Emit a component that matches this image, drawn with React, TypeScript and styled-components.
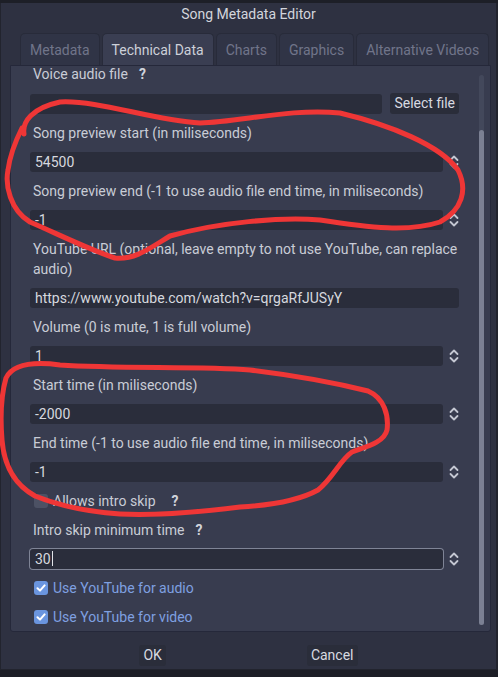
import styled, { createGlobalStyle } from "styled-components";

const GlobalStyle = createGlobalStyle`
  html, body {
    margin: 0;
    padding: 0;
    background: #1c1e26;
  }
  body {
    font-family: Roboto, "Noto Sans", sans-serif;
    font-size: 14px;
  }
`;

// Styled components
const Screen = styled.div`
  position: relative;
  width: 498px;
  height: 677px;
  overflow: hidden;
  background: #1c1e26;
`;

const TopStrip = styled.div`
  height: 3px;
  background: #1d1f27;
`;

const Window = styled.div`
  box-sizing: border-box;
  height: 667px;
  display: flex;
  flex-direction: column;
  background: #2e3141;
  border-left: 1px solid #22242e;
  border-right: 2px solid #22242e;
  border-bottom: 1px solid #22242e;
`;

const TitleBar = styled.div`
  height: 22px;
  line-height: 22px;
  text-align: center;
  color: #d3d5dc;
  font-size: 14px;
`;

const TabBar = styled.div`
  display: flex;
  gap: 2px;
  margin-top: 8px;
  padding-left: 19px;
`;

const Tab = styled.div<{ $active?: boolean }>`
  box-sizing: border-box;
  flex-shrink: 0;
  white-space: nowrap;
  height: 32px;
  line-height: 32px;
  padding: 0 9px;
  border: 1px solid #282b3a;
  border-bottom: none;
  border-radius: 5px 5px 0 0;
  background: ${(p) => (p.$active ? "#3a3e52" : "#303446")};
  color: ${(p) => (p.$active ? "#cdd0d9" : "#70758a")};
`;

const Pane = styled.div`
  box-sizing: border-box;
  height: 567px;
  margin: 0 5px 0 9px;
  display: flex;
  background: #383c4f;
  border: 1px solid #25283a;
  border-radius: 0 0 3px 3px;
`;

const Viewport = styled.div`
  flex: 1;
  overflow: hidden;
  padding: 4px 0 0 19px;
`;

const Content = styled.div`
  width: 429px;
  margin-top: -6px;
  display: flex;
  flex-direction: column;
  gap: 9px;
`;

const ScrollTrack = styled.div`
  width: 5px;
  height: 550px;
  margin: 9px 6px 0 20px;
  border-radius: 3px;
  background: #43485b;
  display: flex;
  flex-direction: column;
`;

const ScrollHandle = styled.div`
  margin-top: 55px;
  flex: 1;
  border-radius: 3px;
  background: #7b8093;
`;

const Label = styled.div`
  line-height: 20px;
  padding-left: 3px;
  color: #c9ccd6;
  display: flex;
  align-items: center;
`;

const Hint = styled.span`
  margin-left: 11px;
  font-weight: bold;
  color: #d0d3db;
`;

const Row = styled.div`
  display: flex;
  align-items: center;
  gap: 8px;
`;

const Field = styled.div<{ $focused?: boolean }>`
  box-sizing: border-box;
  flex: 1;
  height: 20px;
  line-height: 20px;
  padding-left: 5px;
  border-radius: 3px;
  background: #2a2d3b;
  color: #d6d8df;
  white-space: nowrap;
  box-shadow: ${(p) => (p.$focused ? "0 0 0 1px #7f8496" : "none")};
`;

const Caret = styled.span`
  display: inline-block;
  width: 1px;
  height: 15px;
  margin-left: 1px;
  vertical-align: -2px;
  background: #e0e2e8;
`;

const SpinRow = styled.div`
  display: flex;
  align-items: center;
`;

const Arrows = styled.div`
  width: 16px;
  display: flex;
  justify-content: flex-end;
`;

const PushButton = styled.div`
  height: 21px;
  line-height: 21px;
  padding: 0 4px;
  border-radius: 3px;
  background: #2a2d3a;
  color: #d8dae1;
  white-space: nowrap;
`;

const CheckRow = styled.div`
  height: 20px;
  display: flex;
  align-items: center;
  gap: 5px;
  padding-left: 4px;
`;

const Box = styled.div<{ $checked?: boolean }>`
  width: 14px;
  height: 14px;
  border-radius: 3px;
  background: ${(p) => (p.$checked ? "#6a95df" : "#4c5164")};
  display: flex;
  align-items: center;
  justify-content: center;
`;

const CheckText = styled.span<{ $checked?: boolean }>`
  color: ${(p) => (p.$checked ? "#7fa0e1" : "#c9ccd6")};
`;

const ButtonBox = styled.div`
  margin-top: 13px;
  display: flex;
  justify-content: center;
  gap: 141px;
`;

const Overlay = styled.svg`
  position: absolute;
  left: 0;
  top: 0;
  pointer-events: none;
`;

const SpinArrows = () => (
  <Arrows>
    <svg width="10" height="16" viewBox="0 0 10 16">
      <path d="M1.5 6 L5 2.5 L8.5 6" fill="none" stroke="#c4c7d2" strokeWidth="1.8" strokeLinecap="round" strokeLinejoin="round" />
      <path d="M1.5 10 L5 13.5 L8.5 10" fill="none" stroke="#c4c7d2" strokeWidth="1.8" strokeLinecap="round" strokeLinejoin="round" />
    </svg>
  </Arrows>
);

const Spin = ({ value, focused }: { value: string; focused?: boolean }) => (
  <SpinRow>
    <Field $focused={focused}>
      {value}
      {focused && <Caret />}
    </Field>
    <SpinArrows />
  </SpinRow>
);

const Check = ({ label, checked, hint }: { label: string; checked?: boolean; hint?: boolean }) => (
  <CheckRow>
    <Box $checked={checked}>
      {checked && (
        <svg width="10" height="10" viewBox="0 0 10 10">
          <path d="M1.5 5.2 L4 7.6 L8.6 2.4" fill="none" stroke="#ffffff" strokeWidth="2" strokeLinecap="round" strokeLinejoin="round" />
        </svg>
      )}
    </Box>
    <CheckText $checked={checked}>{label}</CheckText>
    {hint && <Hint>?</Hint>}
  </CheckRow>
);

const App = () => {
  return (
    <Screen>
      <GlobalStyle />
      <TopStrip />
      <Window>
        <TitleBar>Song Metadata Editor</TitleBar>
        <TabBar>
          <Tab>Metadata</Tab>
          <Tab $active>Technical Data</Tab>
          <Tab>Charts</Tab>
          <Tab>Graphics</Tab>
          <Tab>Alternative Videos</Tab>
        </TabBar>
        <Pane>
          <Viewport>
            <Content>
              <Label>
                Voice audio file<Hint>?</Hint>
              </Label>
              <Row>
                <Field />
                <PushButton>Select file</PushButton>
              </Row>
              <Label>Song preview start (in miliseconds)</Label>
              <Spin value="54500" />
              <Label>Song preview end (-1 to use audio file end time, in miliseconds)</Label>
              <Spin value="-1" />
              <Label>YouTube URL (optional, leave empty to not use YouTube, can replace audio)</Label>
              <Row>
                <Field>https://www.youtube.com/watch?v=qrgaRfJUSyY</Field>
              </Row>
              <Label>Volume (0 is mute, 1 is full volume)</Label>
              <Spin value="1" />
              <Label>Start time (in miliseconds)</Label>
              <Spin value="-2000" />
              <Label>End time (-1 to use audio file end time, in miliseconds)</Label>
              <Spin value="-1" />
              <Check label="Allows intro skip" hint />
              <Label>
                Intro skip minimum time<Hint>?</Hint>
              </Label>
              <Spin value="30" focused />
              <Check label="Use YouTube for audio" checked />
              <Check label="Use YouTube for video" checked />
            </Content>
          </Viewport>
          <ScrollTrack>
            <ScrollHandle />
          </ScrollTrack>
        </Pane>
        <ButtonBox>
          <PushButton>OK</PushButton>
          <PushButton>Cancel</PushButton>
        </ButtonBox>
      </Window>
      <Overlay width="498" height="677" viewBox="0 0 498 677">
        <path
          d="M24 134 C22 122 32 108 60 102 C100 100 150 120 200 123 C240 122 290 108 340 113 C390 125 440 145 458 170 C468 190 462 210 440 222 C410 232 370 228 320 220 C280 217 220 222 170 236 C150 248 135 260 115 258 C90 250 60 235 30 222 C10 210 5 185 8 170 C10 155 15 142 22 128"
          fill="none"
          stroke="#ef3636"
          strokeWidth="5"
          strokeLinecap="round"
          strokeLinejoin="round"
        />
        <path
          d="M6 378 C12 366 30 361 60 365 C120 369 200 366 250 370 C300 376 340 384 368 391 C384 398 389 415 387 430 C384 443 365 447 352 452 C340 460 333 478 318 490 C300 500 275 505 240 507 C200 512 160 516 120 514 C90 512 60 506 35 496 C15 485 4 465 2 440 C0 415 2 392 6 378"
          fill="none"
          stroke="#ef3636"
          strokeWidth="5"
          strokeLinecap="round"
          strokeLinejoin="round"
        />
      </Overlay>
    </Screen>
  );
};

export default App;
